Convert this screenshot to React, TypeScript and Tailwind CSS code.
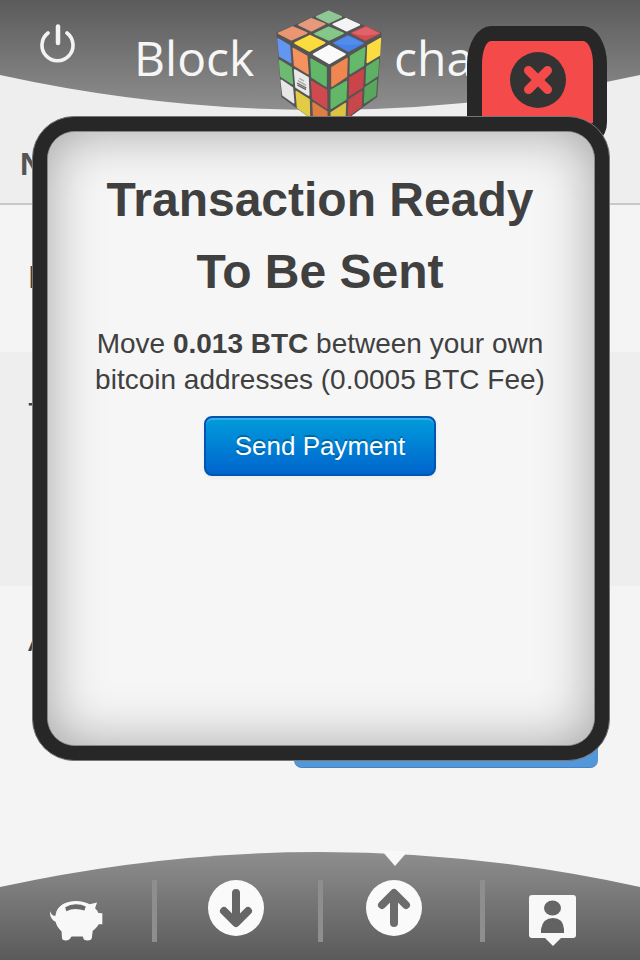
import React from "react";

const stickers: [string, string][] = [
  ["#8fc795", "170,48 206,32 244,48 206,66"],
  ["#e69a7b", "117,72 154,54 194,70 154,90"],
  ["#f4f4f4", "220,71 258,54 298,72 260,90"],
  ["#ea9672", "56,98 98,79 140,97 94,117"],
  ["#83c888", "165,99 206,80 249,98 207,118"],
  ["#d84a50", "276,97 318,78 358,98 316,118"],
  ["#fbdc3d", "105,127 150,105 194,126 148,151"],
  ["#4583ea", "222,127 264,106 309,128 265,151"],
  ["#fafafa", "161,161 207,135 255,161 208,188"],
  ["#6396ef", "54,115 88,135 92,185 59,166"],
  ["#f5925e", "100,144 140,167 144,219 104,194"],
  ["#63b768", "153,176 198,201 198,256 156,229"],
  ["#6dbb70", "59,180 93,201 97,249 63,227"],
  ["#e9e9e9", "104,208 144,231 146,283 108,259"],
  ["#cf494e", "155,243 199,269 200,322 159,294"],
  ["#e6e6e6", "64,239 97,262 101,306 69,283"],
  ["#e2cc45", "109,273 147,297 148,347 113,321"],
  ["#df7d43", "159,307 200,333 201,382 162,359"],
  ["#f08750", "216,201 261,174 259,227 216,256"],
  ["#64b96a", "272,167 314,142 310,194 271,218"],
  ["#fbdd42", "324,135 361,114 358,163 322,185"],
  ["#62b867", "214,269 259,243 257,295 214,322"],
  ["#cc444a", "270,232 310,208 307,259 269,283"],
  ["#5eb064", "321,199 355,177 352,225 319,247"],
  ["#dcc341", "214,336 256,309 254,359 214,382"],
  ["#c7474c", "268,297 305,273 303,317 266,345"],
  ["#58a75d", "316,261 349,239 346,285 314,306"],
];

function Cube() {
  return (
    <svg viewBox="48 28 318 366" className="h-[122px] w-[106px] shrink-0" aria-hidden="true">
      <polygon
        points="52,98 206,31 362,98 349,288 208,392 67,288"
        fill="#555"
        stroke="#555"
        strokeWidth="5"
        strokeLinejoin="round"
      />
      {stickers.map(([fill, points]) => (
        <polygon key={points} points={points} fill={fill} stroke={fill} strokeWidth="5" strokeLinejoin="round" />
      ))}
      <path d="M118 233l14 8M114 240l24 14" stroke="#aaa" strokeWidth="4" />
      <path d="M111 247l28 15M112 253l26 14" stroke="#666" strokeWidth="4" />
      <path d="M276 97Q318 112 358 98L318 78Z" fill="#fff" opacity=".15" />
      <path d="M222 127Q262 138 309 128L264 106Z" fill="#fff" opacity=".08" />
    </svg>
  );
}

function PowerIcon() {
  return (
    <svg viewBox="0 0 36 40" className="h-10 w-9" fill="none" stroke="#f3f3f3" strokeWidth="3.6" strokeLinecap="round" aria-hidden="true">
      <path d="M8 9A15.5 15.5 0 1 0 27 9" />
      <path d="M18 2.500V19" strokeWidth="4.500" />
    </svg>
  );
}

function PigIcon() {
  return (
    <svg viewBox="148 176 166 128" className="h-[43px] w-[55px]" aria-hidden="true">
      <path
        d="M168 222C172 196 198 181 229 181C246 181 260 185 271 191L293 186L287 203C292 208 295 212 297 217L309 218V251H298C293 260 287 266 280 271L277 294Q275 300 265 300Q253 300 252 294L250 288H216L212 294Q208 300 199 300Q187 300 187 292L186 273C176 264 170 254 168 244C158 239 150 229 151 211C154 221 160 226 168 226Z"
        fill="#f8f8f8"
      />
      <path
        d="M197 200Q212 191 229 191Q246 191 259 198L255 210Q242 205 228 205Q214 205 200 212Z"
        fill="#686868"
      />
    </svg>
  );
}

function ArrowIcon({ up = false }: { up?: boolean }) {
  return (
    <svg viewBox="0 0 56 56" className="size-14" aria-hidden="true">
      <circle cx="28" cy="28" r="28" fill="#fafafa" />
      <path
        d={up ? "M28 43V14M16 25L28 13L40 25" : "M28 13V42M16 31L28 43L40 31"}
        fill="none"
        stroke={up ? "#6c6c6c" : "#666"}
        strokeWidth="8"
        strokeLinecap="round"
        strokeLinejoin="round"
      />
      <path d={up ? "M28 11L36 20H20Z" : "M28 45L36 36H20Z"} fill={up ? "#6c6c6c" : "#666"} />
    </svg>
  );
}

function ContactIcon() {
  return (
    <svg viewBox="0 0 48 52" className="h-[52px] w-12" aria-hidden="true">
      <path d="M3 0H44Q47 0 47 3V40Q47 43 44 43H32L24 51L16 43H3Q0 43 0 40V3Q0 0 3 0Z" fill="#f8f8f8" />
      <ellipse cx="23.500" cy="13" rx="8.500" ry="7.500" fill="#666" />
      <path d="M12 38V34Q14 23 24 23Q34 23 35 34V38Z" fill="#626262" />
    </svg>
  );
}

const divider = "border-r-[5px] border-[#8e8e8e]";

export default function App() {
  return (
    <div className="relative flex min-h-screen flex-col overflow-hidden bg-[#f4f4f4] font-['Liberation_Sans',Arial,sans-serif] text-[#404040]">
      <header className="relative h-[110px] bg-[#eee]">
        <svg viewBox="0 0 640 110" preserveAspectRatio="none" className="absolute inset-0 size-full" aria-hidden="true">
          <defs>
            <linearGradient id="top" x1="0" y1="0" x2="0" y2="1">
              <stop offset="0" stopColor="#5b5b5b" />
              <stop offset="1" stopColor="#8e8e8e" />
            </linearGradient>
          </defs>
          <path d="M0 0H640V75Q480 110 320 110Q160 110 0 75Z" fill="url(#top)" />
        </svg>
        <div className="relative flex items-start pl-10">
          <button type="button" aria-label="Log out" className="mt-6">
            <PowerIcon />
          </button>
          <div className="ml-14 flex items-start font-['Open_Sans','Noto_Sans',sans-serif] text-5xl leading-[60px] font-medium text-[#f6f6f6]">
            <span className="mt-7 w-[132px] pl-0.5">Block</span>
            <span className="mt-2.5 ml-3 flex">
              <Cube />
            </span>
            <span className="mt-7 ml-3">chain</span>
          </div>
        </div>
      </header>

      <main>
        <h1 className="h-[95px] border-b-2 border-[#c8c8c8] bg-[#eee] px-5 pt-9 text-[32px] leading-9 font-bold text-[#555]">New</h1>
        <dl className="text-[32px] leading-9">
          <dt className="h-[147px] px-7 pt-[54px]">From</dt>
          <dt className="h-[234px] bg-[#eee] px-7 pt-11">To</dt>
          <dt className="h-[122px] px-7 pt-9">Amount</dt>
        </dl>
        <div className="flex justify-end pr-[42px]">
          <button type="button" className="h-[60px] w-[304px] rounded-lg border-b border-[#4a80c4] bg-[#5397db] text-[26px] text-white">
            Continue
          </button>
        </div>
      </main>

      <footer className="relative mt-auto h-[108px]">
        <svg viewBox="0 0 640 108" preserveAspectRatio="none" className="absolute inset-0 size-full" aria-hidden="true">
          <defs>
            <linearGradient id="bottom" x1="0" y1="0" x2="0" y2="1">
              <stop offset="0" stopColor="#8e8e8e" />
              <stop offset="1" stopColor="#5a5a5a" />
            </linearGradient>
          </defs>
          <path d="M0 108V35Q160 0 320 0Q480 0 640 35V108Z" fill="url(#bottom)" />
        </svg>
        <nav className="relative grid grid-cols-[157fr_166fr_162fr_155fr] pt-7">
          <div className={`flex h-[62px] justify-center pt-[19px] ${divider}`}>
            <button type="button" aria-label="Balance">
              <PigIcon />
            </button>
          </div>
          <div className={`flex h-[62px] items-start justify-center pr-1 ${divider}`}>
            <button type="button" aria-label="Receive">
              <ArrowIcon />
            </button>
          </div>
          <div className={`flex h-[62px] items-start justify-center pr-4 ${divider}`}>
            <button type="button" aria-label="Send" aria-current="page" className="relative">
              <ArrowIcon up />
              <svg viewBox="0 0 26 15" className="absolute -top-[29px] left-4 h-[15px] w-[26px]" aria-hidden="true">
                <path d="M0 0H26L13 15Z" fill="#f8f8f8" />
              </svg>
            </button>
          </div>
          <div className="flex h-[62px] justify-center pt-[15px] pr-5">
            <button type="button" aria-label="Contacts">
              <ContactIcon />
            </button>
          </div>
        </nav>
      </footer>

      <div role="dialog" aria-labelledby="dialog-title" className="absolute top-[116px] right-[30px] left-8">
        <button
          type="button"
          aria-label="Close"
          className="absolute -top-[90px] right-[3px] flex h-28 w-[140px] justify-center rounded-[24px_24px_8px_8px/38px_38px_16px_16px] border-[15px] border-r-[14px] border-[#272727] bg-[#f54a4a] pt-[11px]"
        >
          <svg viewBox="0 0 56 56" className="size-14" aria-hidden="true">
            <circle cx="28" cy="28" r="28" fill="#333" />
            <path d="M18.500 18.500L37.500 37.500M37.500 18.500L18.500 37.500" stroke="#f54a4a" strokeWidth="9" strokeLinecap="round" />
          </svg>
        </button>
        <div className="relative rounded-[42px] border border-[#777] bg-[#272727] p-[14px]">
          <section className="flex min-h-[615px] flex-col items-center rounded-[28px] border border-[#888] bg-[#f6f6f6] pt-8 pr-[42px] pl-10 text-center shadow-[inset_0_0_54px_rgba(0,0,0,0.34)]">
            <h2 id="dialog-title" className="text-5xl leading-[72px] font-bold">
              Transaction Ready
              <br />
              To Be Sent
            </h2>
            <p className="mt-[18px] text-[28px] leading-9">
              Move <b>0.013 BTC</b> between your own
              <br />
              bitcoin addresses (0.0005 BTC Fee)
            </p>
            <button
              type="button"
              className="mt-[18px] h-[60px] w-[232px] rounded-lg border-2 border-[#0055b3] bg-linear-to-b from-[#049cdb] to-[#0064cd] text-[26px] leading-9 text-white shadow-[inset_0_2px_0_rgba(255,255,255,0.2),0_2px_4px_rgba(0,0,0,0.05)] text-shadow-[0_-2px_0_rgba(0,0,0,0.25)]"
            >
              Send Payment
            </button>
          </section>
        </div>
      </div>
    </div>
  );
}
